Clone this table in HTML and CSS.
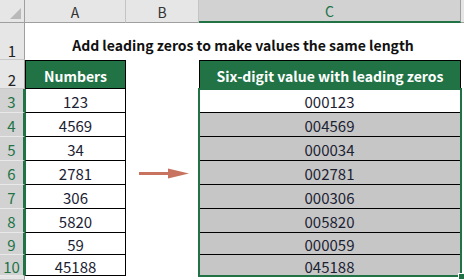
FILE: index.html
```html
<!DOCTYPE html>
<html>
<head>
<meta charset="utf-8">
<link rel="stylesheet" href="styles.css">
</head>
<body>
<div class="sheet">
  <div class="corner"><span class="tri"></span></div>
  <div class="colhead">A</div>
  <div class="colhead">B</div>
  <div class="colhead sel">C</div>
  <div class="colhead last"></div>

  <div class="rowhead">1</div>
  <div class="title">Add leading zeros to make values the same length</div>
  <div class="blank"></div>

  <div class="rowhead">2</div>
  <div class="hdr hdr-a">Numbers</div>
  <div class="empty"></div>
  <div class="hdr hdr-c">Six-digit value with leading zeros</div>
  <div class="blank"></div>

  <div class="colc">
    <div class="cc active">000123</div>
    <div class="cc">004569</div>
    <div class="cc">000034</div>
    <div class="cc">002781</div>
    <div class="cc">000306</div>
    <div class="cc">005820</div>
    <div class="cc">000059</div>
    <div class="cc">045188</div>
    <span class="handle"></span>
  </div>

  <div class="rowhead rsel">3</div><div class="ca">123</div><div class="empty"></div><div class="blank"></div>
  <div class="rowhead rsel">4</div><div class="ca">4569</div><div class="empty"></div><div class="blank"></div>
  <div class="rowhead rsel">5</div><div class="ca">34</div><div class="empty"></div><div class="blank"></div>
  <div class="rowhead rsel">6</div><div class="ca">2781</div>
  <div class="empty arrowcell">
    <svg class="arrow" width="50" height="11" viewBox="0 0 50 11"><line x1="0" y1="5.5" x2="32" y2="5.5" stroke="#c8735f" stroke-width="3"/><polygon points="29,0.5 50,5.5 29,10.5" fill="#c8735f"/></svg>
  </div>
  <div class="blank"></div>
  <div class="rowhead rsel">7</div><div class="ca">306</div><div class="empty"></div><div class="blank"></div>
  <div class="rowhead rsel">8</div><div class="ca">5820</div><div class="empty"></div><div class="blank"></div>
  <div class="rowhead rsel">9</div><div class="ca">59</div><div class="empty"></div><div class="blank"></div>
  <div class="rowhead rsel">10</div><div class="ca">45188</div><div class="empty"></div><div class="blank"></div>

  <div class="rowhead"></div>
</div>
</body>
</html>
```

FILE: styles.css
```css
* { box-sizing: border-box; }
html, body { margin: 0; padding: 0; background: #ffffff; }
body {
  font-family: "Noto Sans CJK SC", "Noto Sans", sans-serif;
  color: #1a1a1a;
  width: 464px;
  height: 280px;
  overflow: hidden;
}
.sheet {
  display: grid;
  grid-template-columns: 25px 101px 73px 262px 3px;
  grid-template-rows: 23px 37px 29px repeat(6, 24px) 22px 21px 4px;
  width: 464px;
  height: 280px;
}
.corner {
  background: #e6e6e6;
  border-right: 1px solid #9f9f9f;
  border-bottom: 1px solid #9f9f9f;
  position: relative;
}
.tri {
  position: absolute;
  right: 3px;
  bottom: 3px;
  width: 0; height: 0;
  border-left: 11px solid transparent;
  border-bottom: 11px solid #b9b9b9;
}
.colhead {
  background: #e6e6e6;
  border-right: 1px solid #c4c4c4;
  border-bottom: 1px solid #9f9f9f;
  display: flex;
  align-items: center;
  justify-content: center;
  font-size: 14px;
  color: #333;
  padding-top: 1px;
}
.colhead.sel {
  background: #d2d2d2;
  color: #217346;
  border-bottom: 2px solid #217346;
  border-right: 1px solid #9f9f9f;
}
.colhead.last { border-right: none; }
.rowhead {
  background: #e6e6e6;
  border-right: 1px solid #9f9f9f;
  border-bottom: 1px solid #c9c9c9;
  display: flex;
  align-items: flex-end;
  justify-content: center;
  font-size: 15px;
  color: #222;
  padding-bottom: 1px;
  line-height: 1;
  overflow: hidden;
}
.rowhead.rsel {
  background: #d2d2d2;
  color: #217346;
  border-right: 2px solid #217346;
  border-bottom: 1px solid #e9e9e9;
  align-items: center;
  padding-bottom: 0;
  padding-top: 2px;
}
.title {
  grid-column: 2 / 5;
  display: flex;
  align-items: center;
  justify-content: center;
  font-weight: bold;
  font-size: 14px;
  color: #111;
  padding-top: 6px;
}
.hdr {
  background: #217346;
  color: #ffffff;
  font-weight: bold;
  font-size: 14px;
  display: flex;
  align-items: center;
  justify-content: center;
  border: 1px solid #000;
  padding-top: 3px;
}
.ca, .cc {
  display: flex;
  align-items: center;
  justify-content: center;
  font-size: 15px;
  color: #1c2233;
  border-bottom: 1px solid #000;
  padding-top: 2px;
}
.ca {
  border-left: 1px solid #217346;
  border-right: 1px solid #000;
}
.cc {
  background: #c6c6c6;
  border-right: 1px solid #000;
}
.cc.active { background: #ffffff; }
.colc {
  grid-column: 4 / 5;
  grid-row: 4 / 12;
  display: grid;
  grid-template-rows: repeat(6, 24px) 22px 21px;
  outline: 2px solid #217346;
  outline-offset: -1px;
  position: relative;
}
.arrowcell {
  display: flex;
  align-items: center;
  padding-left: 13px;
  padding-top: 1px;
}
.arrow { display: block; }
.handle {
  position: absolute;
  right: -4px;
  bottom: -4px;
  width: 7px;
  height: 7px;
  background: #217346;
  border: 1px solid #ffffff;
}
```
